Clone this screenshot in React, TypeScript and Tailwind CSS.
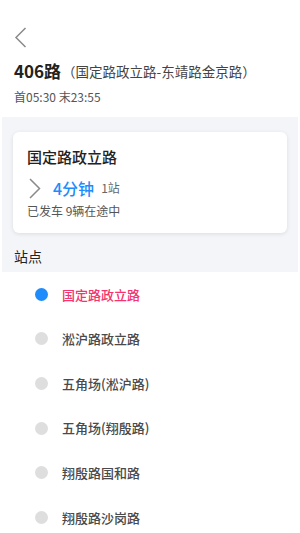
export default function App() {
    const stations = [
        '国定路政立路',
        '淞沪路政立路',
        '五角场(淞沪路)',
        '五角场(翔殷路)',
        '翔殷路国和路',
        '翔殷路沙岗路',
    ];

    return (
        <div
            className="w-[300px] h-[533px] bg-white overflow-hidden"
            style={{ fontFamily: '"Noto Sans CJK SC", "Noto Sans", sans-serif' }}
        >
            {/* 返回 */}
            <div className="h-[56px] pt-[27px] pl-[14px]">
                <svg width="13" height="21" viewBox="0 0 13 21" fill="none">
                    <path d="M11.5 1 L2 10.5 L11.5 20" stroke="#8a8a8a" strokeWidth="1.5" />
                </svg>
            </div>

            {/* 线路信息 */}
            <div className="h-[30px] flex items-center pl-[14px]">
                <span className="text-[17px] font-bold text-[#222]">406路</span>
                <span className="text-[13.5px] text-[#444] ml-[1px]">（国定路政立路-东靖路金京路）</span>
            </div>
            <div className="h-[22px] flex items-center pl-[14px] text-[12px] text-[#555]">
                首05:30 末23:55
            </div>
            <div className="h-[9px]" />

            <div className="mx-[2px] bg-[#f4f5f9] pt-[15px]">
                {/* 卡片 */}
                <div className="mx-[11px] h-[101px] bg-white rounded-[6px] shadow-[0_1px_4px_rgba(0,0,0,0.1)] pl-[14px] pt-[14px]">
                    <div className="h-[22px] flex items-center text-[15px] font-medium text-[#222]">
                        国定路政立路
                    </div>
                    <div className="h-[24px] mt-[8px] flex items-center">
                        <svg width="12" height="21" viewBox="0 0 12 21" fill="none" className="ml-[2px]">
                            <path d="M1 1 L10.5 10.5 L1 20" stroke="#8a8a8a" strokeWidth="1.5" />
                        </svg>
                        <span className="ml-[12px] text-[16px] font-medium text-[#1e8cfb]">4分钟</span>
                        <span className="ml-[7px] text-[12px] text-[#666]">1站</span>
                    </div>
                    <div className="h-[16px] mt-[3px] flex items-center text-[12px] text-[#555]">
                        已发车 9辆在途中
                    </div>
                </div>
                <div className="h-[39px] pt-[8px] pl-[12px] flex items-center text-[14px] text-[#222]">
                    站点
                </div>
            </div>

            {/* 站点列表 */}
            <div>
                {stations.map((name, index) => (
                    <div key={name} className="h-[44.6px] flex items-center pl-[35px]">
                        <div
                            className={
                                index === 0
                                    ? 'w-[13px] h-[13px] rounded-full bg-[#1e8cfb]'
                                    : 'w-[13px] h-[13px] rounded-full bg-[#dedede]'
                            }
                        />
                        <span
                            className={
                                index === 0
                                    ? 'ml-[14px] text-[13px] font-medium text-[#f5336f]'
                                    : 'ml-[14px] text-[13px] font-medium text-[#4a4a4a]'
                            }
                        >
                            {name}
                        </span>
                    </div>
                ))}
            </div>
        </div>
    );
}
